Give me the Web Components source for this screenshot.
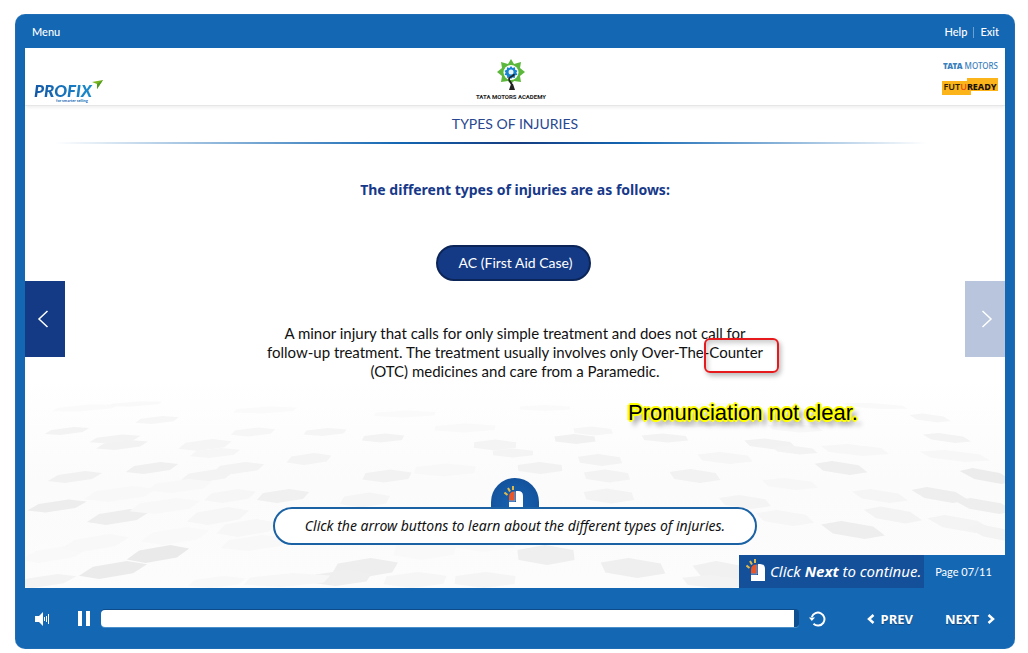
<!DOCTYPE html>
<html lang="en">
<head>
<meta charset="utf-8">
<title>Types of Injuries</title>
<style>
  html, body { margin: 0; }
  body { background: #fff; font-family: Lato, "Noto Sans", sans-serif; color: #111; }
</style>
</head>
<body>
<course-player></course-player>

<template id="t-player">
  <style>
    :host { display: flex; box-sizing: border-box; min-height: 100vh; padding: 14px 13px 4px 15px; }
    .frame { flex: 1; display: flex; flex-direction: column; background: #1467b3; border-radius: 10px; padding: 0 10px; box-shadow: inset 0 0 1px #7fa9cc; }
    .stage { flex: 1; position: relative; isolation: isolate; background: #fff; display: flex; flex-direction: column; }
    hex-floor { position: absolute; inset: auto 0 0 0; z-index: -1; }
  </style>
  <div class="frame">
    <top-bar></top-bar>
    <div class="stage">
      <hex-floor></hex-floor>
      <brand-header></brand-header>
      <lesson-title>TYPES OF INJURIES</lesson-title>
      <lesson-body></lesson-body>
      <page-strip></page-strip>
    </div>
    <player-controls></player-controls>
  </div>
</template>

<template id="t-top">
  <style>
    :host { display: flex; align-items: center; justify-content: space-between; height: 34px; padding: 2px 6px 0 7px; box-sizing: border-box; font: 500 11px/16px Lato, sans-serif; }
    a { color: #fff; text-decoration: none; }
    nav { display: flex; align-items: center; }
    i { width: 1px; height: 11px; background: #6ba0d0; margin: 0 6px; }
  </style>
  <a href="#menu">Menu</a>
  <nav><a href="#help">Help</a><i></i><a href="#exit">Exit</a></nav>
</template>

<template id="t-brand">
  <style>
    :host { display: grid; grid-template-columns: 1fr auto 1fr; height: 57px; border-bottom: 1px solid #e6e6e6; box-shadow: 0 2px 3px #0000000f; background: #fff; }
    .profix { align-self: end; padding-left: 9px; color: #1467b3; position: relative; width: 70px; }
    .profix b { display: block; font: italic 900 17px/14px Lato, sans-serif; background: linear-gradient(90deg, #1558a6, #1a8fd0); background-clip: text; -webkit-background-clip: text; color: transparent; width: 62px; }
    .profix small { display: block; font: 700 4px/5px Lato, sans-serif; padding: 0 0 2px 22px; white-space: nowrap; }
    .profix svg { position: absolute; left: 67px; top: -4px; }
    .academy { display: flex; flex-direction: column; align-items: center; padding-top: 11px; padding-right: 8px; }
    .academy span { font: 700 6px/12px Roboto, sans-serif; color: #222; white-space: nowrap; }
    .right { display: flex; flex-direction: column; align-items: flex-end; padding: 13px 7px 0 0; }
    .tata { font: 500 8px/10px "Noto Sans", sans-serif; color: #3b80bd; }
    .tata b { font-weight: 900; }
    .fut { margin-top: 7px; height: 17px; width: 56px; display: flex; justify-content: center; font: 600 9px/17px "Noto Sans", sans-serif; color: #2a1d05; background: linear-gradient(#fbb41a, #fbb41a) 0 3px / 29px 14px no-repeat, linear-gradient(#fbb41a, #fbb41a) 25px 0 / 31px 13px no-repeat; }
    .fut em { font-style: normal; color: #e8501c; }
    .fut b { font-weight: 800; color: #1b1208; }
  </style>
  <div class="profix"><b>PROFIX</b><small>for smarter selling</small>
    <svg width="12" height="10" viewBox="0 0 12 10"><path d="M0 2 11 0 5 9 5 4Z" fill="#7ab51d"/><path d="M11 0 5 4 5 9Z" fill="#4f9a22"/></svg>
  </div>
  <div class="academy">
    <svg width="30" height="32" viewBox="0 0 30 32">
      <path d="M15 0l3 5 7-2-1 6 5 4-5 4 1 6-7-1-3 3-3-3-7 1 1-6-5-4 5-4-1-6 7 2z" fill="#5cb83c"/>
      <circle cx="15" cy="13.500" r="7.500" fill="#fff"/>
      <path d="M15 7l1.500 2 2.500-.8.2 2.500 2.300 1-1.200 2 1.200 2-2.500.8-.2 2.500-2.300-.5-1.500 1.500-1.500-1.500-2.300.5-.2-2.500-2.500-.8 1.200-2-1.200-2 2.300-1 .2-2.500 2.500.8z" fill="#1783cc"/>
      <circle cx="15" cy="13" r="2.500" fill="#e7f4fb"/>
      <path d="M18 15c0 3-5 2-5 5 0 3 4 4 3 8" fill="none" stroke="#222" stroke-width="1.800"/>
      <path d="M15 25l-2 6h6l-2-6z" fill="#222"/>
    </svg>
    <span>TATA MOTORS ACADEMY</span>
  </div>
  <div class="right">
    <div class="tata"><b>TATA</b> MOTORS</div>
    <div class="fut"><span>FUT<em>U</em><b>READY</b></span></div>
  </div>
</template>

<template id="t-title">
  <style>
    :host { display: block; }
    h1 { margin: 0; padding: 8px 0; font: 400 14px/20px Lato, sans-serif; color: #29478f; text-align: center; }
    div { height: 2px; background: linear-gradient(90deg, #1467b300 3%, #1467b3 38%, #153b80 50%, #1467b3 62%, #1467b300 92%); }
  </style>
  <h1><slot></slot></h1><div></div>
</template>

<template id="t-body">
  <style>
    :host { flex: 1; display: grid; grid-template-columns: 40px 1fr 40px; }
    side-arrow { margin-top: 137px; }
    main { display: flex; flex-direction: column; align-items: center; position: relative; }
    h2 { margin: 36px 0 0; font: 700 14px/20px "Noto Sans", sans-serif; color: #17398a; }
    .pill { margin-top: 45px; height: 36px; box-sizing: border-box; border: 2px solid #0c2559; border-radius: 18px; padding: 0 17px 0 21px; background: #143a86; color: #fff; font: 400 14px/32px Lato, sans-serif; margin-right: 3px; }
    p { margin: 43px 0 0; font: 400 15px/19px Lato, sans-serif; text-align: center; white-space: nowrap; }
    mark { background: none; color: inherit; position: relative; }
    mark::after { content: ""; position: absolute; inset: -5px -16px -12px -5px; border: 2px solid #e6191c; border-radius: 6px; box-shadow: 2px 3px 5px #0004, inset 2px 3px 5px #0003; }
    .note { position: absolute; left: 563px; top: 255px; font: 400 22px/28px "Liberation Sans", Arial, sans-serif; color: #000; white-space: nowrap;
      text-shadow: 2px 0 0 #ff0, -2px 0 0 #ff0, 0 2px 0 #ff0, 0 -2px 0 #ff0, 1px 1px 1px #ff0, -1px 1px 1px #ff0, 1px -1px 1px #ff0, -1px -1px 1px #ff0, 4px 5px 5px #0009; }
    .hint { margin-top: auto; padding-bottom: 10px; display: flex; flex-direction: column; align-items: center; }
    .cap { width: 48px; height: 30px; border-radius: 24px 24px 0 0; background: radial-gradient(circle at 50% 90%, #1763b0, #124c96); display: flex; justify-content: center; }
    .cap mouse-icon { margin: 8px 2px 0 0; }
    .box { margin-top: -1px; box-sizing: border-box; height: 38px; border: 2px solid #1b62a5; border-radius: 19px; background: #fff; padding: 0 30px; font: italic 400 14px/34px "Noto Sans", sans-serif; white-space: nowrap; }
  </style>
  <side-arrow label="Previous type"></side-arrow>
  <main>
    <h2>The different types of injuries are as follows:</h2>
    <div class="pill">AC (First Aid Case)</div>
    <p>A minor injury that calls for only simple treatment and does not call for<br>follow-up treatment. The treatment usually involves only Over-The-<mark>Counter</mark><br>(OTC) medicines and care from a Paramedic.</p>
    <div class="note">Pronunciation not clear.</div>
    <div class="hint">
      <div class="cap"><mouse-icon></mouse-icon></div>
      <div class="box">Click the arrow buttons to learn about the different types of injuries.</div>
    </div>
  </main>
  <side-arrow forward label="Next type"></side-arrow>
</template>

<template id="t-arrow">
  <style>
    :host { display: block; height: 76px; }
    button { all: unset; display: grid; place-items: center; width: 100%; height: 100%; background: #143a86; cursor: pointer; }
    svg { fill: none; stroke: #fff; stroke-width: 1.500; margin-right: 4px; }
    :host([forward]) button { background: #b9c5dc; }
    :host([forward]) svg { transform: scaleX(-1); margin: 0 0 0 4px; }
  </style>
  <button><svg width="12" height="18" viewBox="0 0 12 18"><path d="M10.500 1 2 9l8.500 8"/></svg></button>
</template>

<template id="t-mouse">
  <style>:host { display: block; width: 20px; height: 22px; } svg { display: block; }</style>
  <svg width="20" height="22" viewBox="0 0 20 22">
    <path d="M12 5h2q5 0 5 5v12H5v-6h7z" fill="#fff"/>
    <path d="M5 14.500V11Q5 5.500 10.500 5.500V14.500z" fill="#e8572a"/>
    <path d="M5 15h6V5.500" fill="none" stroke="#9fb3d6" stroke-width=".8"/>
    <path d="M.5 6.500 3.500 9M4 2 6 5.500M9 0v4" stroke="#e0bb4c" stroke-width="2" fill="none"/>
  </svg>
</template>

<template id="t-strip">
  <style>
    :host { display: flex; justify-content: flex-end; height: 33px; color: #fff; white-space: nowrap; }
    .go { display: flex; align-items: center; background: #144f99; width: 185px; box-sizing: border-box; padding-left: 7px; font: italic 400 15px/32px "Noto Sans", sans-serif; }
    .go span { padding-bottom: 2px; }
    mouse-icon { margin: 0 4px 4px 0; }
    .page { background: #1467b3; width: 81px; padding-right: 2px; box-sizing: border-box; text-align: center; font: 400 11px/34px Lato, sans-serif; }
  </style>
  <div class="go"><mouse-icon></mouse-icon><span>Click <b>Next</b> to continue.</span></div>
  <div class="page">Page 07/11</div>
</template>

<template id="t-controls">
  <style>
    :host { display: flex; align-items: center; height: 61px; color: #fff; }
    button { all: unset; display: flex; align-items: center; cursor: pointer; font: 700 13px/18px "Noto Sans", sans-serif; text-shadow: 0 1px 1px #0005; }
    svg { display: block; }
    .vol { margin-left: 10px; }
    .pause { margin-left: 28px; }
    input { appearance: none; -webkit-appearance: none; flex: 1; min-width: 0; height: 17px; margin: 0 10px; border-radius: 4px; background: linear-gradient(90deg, #fff calc(100% - 5px), #0f4f8f 0); box-shadow: 0 -1px 0 #0e4b8a, 0 1px 0 #4a8fc9; }
    input::-webkit-slider-thumb { -webkit-appearance: none; width: 0; height: 0; }
    .prev { margin-left: 41px; gap: 6px; }
    .next { margin: 0 10px 0 32px; gap: 8px; }
  </style>
  <button class="vol" aria-label="Sound"><svg width="15" height="14" viewBox="0 0 15 14"><path d="M0 4h4l4-4v14l-4-4H0z" fill="#fff"/><path d="M9.500 5v4M11.500 4v6M13.500 2v10" stroke="#fff"/></svg></button>
  <button class="pause" aria-label="Pause"><svg width="13" height="15" viewBox="0 0 13 15"><path d="M0 0h4v15H0zM8 0h4v15H8z" fill="#fff"/></svg></button>
  <input type="range" aria-label="Progress" value="99">
  <button aria-label="Replay"><svg width="17" height="17" viewBox="0 0 17 17"><path d="M4.500 13.800A6.500 6.500 0 1 0 2.800 7" fill="none" stroke="#fff" stroke-width="2"/><path d="M0 7.500h6L2.800 11z" fill="#fff"/></svg></button>
  <button class="prev"><svg width="8" height="10" viewBox="0 0 8 10"><path d="M6.500 1 2 5l4.500 4" fill="none" stroke="#fff" stroke-width="2.500"/></svg>PREV</button>
  <button class="next">NEXT<svg width="8" height="10" viewBox="0 0 8 10"><path d="M1.500 1 6 5 1.500 9" fill="none" stroke="#fff" stroke-width="2.500"/></svg></button>
</template>

<script>
const define = (name, id, setup) => customElements.define(name, class extends HTMLElement {
  connectedCallback() {
    if (this.shadowRoot) return;
    const root = this.attachShadow({ mode: 'open' });
    root.append(document.getElementById(id).content.cloneNode(true));
    if (setup) setup(this, root);
  }
});

// Floor of flattened hexagons; tiles lean away from the centre line.
// Each row: centre x, centre y, width, height, grey level.
customElements.define('hex-floor', class extends HTMLElement {
  connectedCallback() {
    if (this.shadowRoot) return;
    const tiles = [
      [133,176,50,18,234],[88,192,54,18,235],[93,139,50,16,238],[32,128,48,13,237],[50,99,44,12,241],[127,90,44,12,240],[182,98,44,13,243],[214,90,44,12,243],[90,61,44,9,243],[97,67,44,10,242],[42,53,38,8,243],[132,42,38,8,246],
      [180,67,46,12,245],[190,75,44,10,246],[228,54,40,9,246],[284,81,40,12,244],[258,118,46,14,240],[205,118,44,14,246],[193,138,52,18,246],[222,150,52,18,247],[230,165,60,16,248],[140,128,60,16,248],[95,116,60,16,248],[155,108,56,14,248],
      [340,190,60,20,238],[316,200,56,16,239],[262,202,80,14,247],[20,203,50,14,243],[192,204,50,12,248],[30,176,54,18,249],[70,165,54,18,248],[150,158,56,18,249],
      [358,60,40,9,243],[300,54,40,8,245],[470,67,42,11,244],[488,75,40,9,244],[362,98,46,13,242],[420,92,60,13,248],[550,61,40,10,241],[568,53,38,9,246],[640,60,44,9,243],[575,82,42,12,243],[515,90,44,12,242],[582,98,44,13,243],[584,118,48,15,243],[340,122,46,15,245],[460,165,60,18,249],
      [521,177,56,20,239],[608,190,60,20,239],[400,172,60,20,249],[390,202,60,16,246],[460,202,60,16,245],[700,194,56,22,241],[690,204,60,14,243],
      [670,98,46,14,242],[745,66,46,11,242],[770,72,40,9,243],[905,40,34,9,246],[922,60,40,10,243],[816,90,44,14,239],[962,98,40,16,236],[915,117,44,16,238],[960,128,46,16,238],[868,137,46,17,243],[828,152,52,18,238],[855,118,46,14,245],[720,124,46,14,244],[760,140,50,16,246],[935,146,50,18,244],[970,155,40,18,243],[890,204,60,18,238],[765,106,50,12,247],[700,80,50,12,246],[830,72,60,12,247],[770,50,50,9,247],[930,78,60,12,247],[665,45,50,9,248],[440,50,60,9,249],[240,32,60,7,250],[380,36,60,7,250],[520,30,50,6,250],[60,30,60,7,250],[110,26,50,5,249],[850,28,60,6,249],[700,28,60,6,249]
    ];
    const poly = ([x, y, w, h, g]) => {
      const lean = (490 - x) / 260;
      const tilt = (x - 490) / 9000;
      const pts = [[0,-h/2],[w/2,-h/4],[w/2,h/4],[0,h/2],[-w/2,h/4],[-w/2,-h/4]]
        .map(([dx, dy]) => (x + dx - lean * dy).toFixed(1) + ',' + (y + dy + tilt * dx).toFixed(1)).join(' ');
      return `<polygon points="${pts}" fill="rgb(${g},${g},${g})"/>`;
    };
    this.attachShadow({ mode: 'open' }).innerHTML = `
      <style>
        :host { display: block; height: 210px; background: linear-gradient(#fff, #fbfbfb 50%, #fcfcfc); }
        svg { display: block; width: 100%; height: 100%; }
      </style>
      <svg viewBox="0 0 980 210" preserveAspectRatio="none" aria-hidden="true">${tiles.map(poly).join('')}</svg>`;
  }
});

define('mouse-icon', 't-mouse');
define('side-arrow', 't-arrow', (el, root) => root.querySelector('button').setAttribute('aria-label', el.getAttribute('label')));
define('top-bar', 't-top');
define('brand-header', 't-brand');
define('lesson-title', 't-title');
define('lesson-body', 't-body');
define('page-strip', 't-strip');
define('player-controls', 't-controls');
define('course-player', 't-player');
</script>
</body>
</html>
